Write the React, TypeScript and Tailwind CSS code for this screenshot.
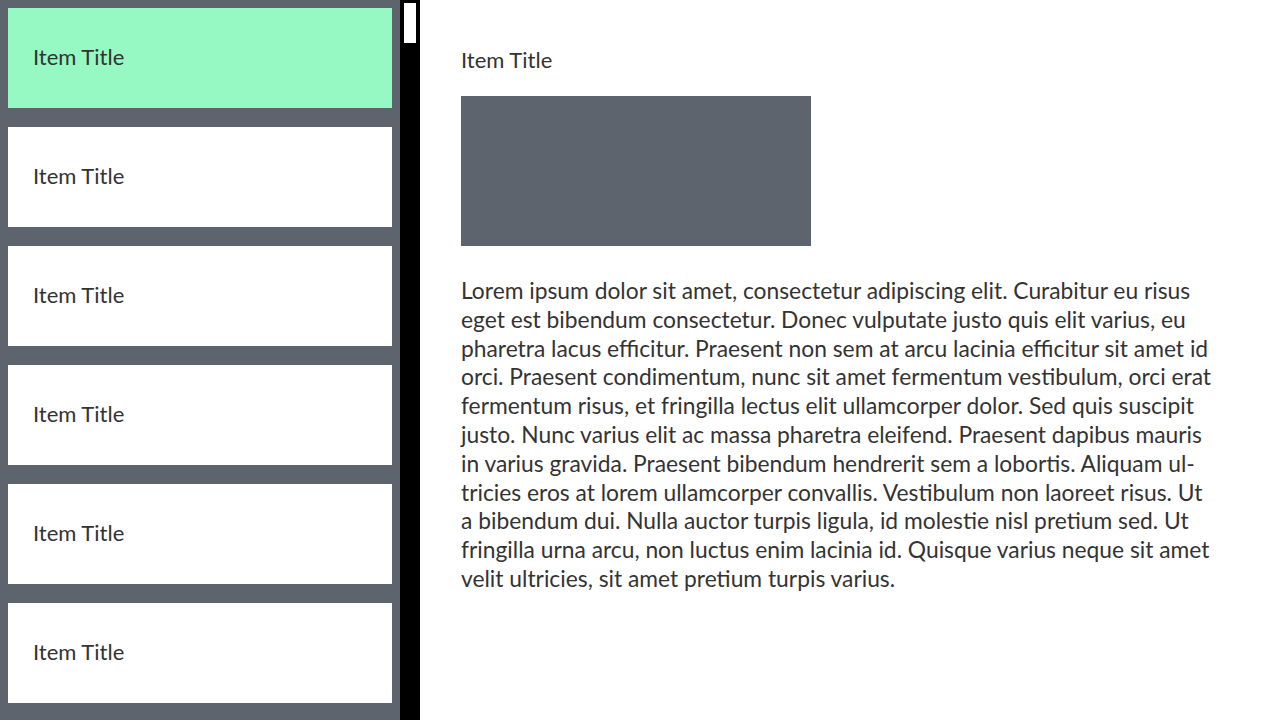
import React from "react";

const items = ["Item Title", "Item Title", "Item Title", "Item Title", "Item Title", "Item Title"];

const lines = [
  "Lorem ipsum dolor sit amet, consectetur adipiscing elit. Curabitur eu risus",
  "eget est bibendum consectetur. Donec vulputate justo quis elit varius, eu",
  "pharetra lacus efficitur. Praesent non sem at arcu lacinia efficitur sit amet id",
  "orci. Praesent condimentum, nunc sit amet fermentum vestibulum, orci erat",
  "fermentum risus, et fringilla lectus elit ullamcorper dolor. Sed quis suscipit",
  "justo. Nunc varius elit ac massa pharetra eleifend. Praesent dapibus mauris",
  "in varius gravida. Praesent bibendum hendrerit sem a lobortis. Aliquam ul-",
  "tricies eros at lorem ullamcorper convallis. Vestibulum non laoreet risus. Ut",
  "a bibendum dui. Nulla auctor turpis ligula, id molestie nisl pretium sed. Ut",
  "fringilla urna arcu, non luctus enim lacinia id. Quisque varius neque sit amet",
  "velit ultricies, sit amet pretium turpis varius.",
];

export default function App() {
  return (
    <div className="flex h-[720px] w-[1280px] overflow-hidden bg-white font-['Lato',sans-serif] text-[#333]">
      {/* list */}
      <div className="flex h-[720px] w-[400px] shrink-0 flex-col gap-[19px] overflow-hidden bg-[#5d646e] p-2">
        {items.map((t, i) => (
          <div
            key={i}
            className={`flex h-[100px] shrink-0 items-center px-[25px] pb-1 text-[22px] ${i === 0 ? "bg-[#96f9c3]" : "bg-white"}`}
          >
            {t}
          </div>
        ))}
      </div>
      {/* scrollbar */}
      <div className="w-5 shrink-0 bg-black px-1 pt-[3px]">
        <div className="h-10 w-3 bg-white" />
      </div>
      {/* detail */}
      <div className="flex flex-col pl-[41px] pt-[46px]">
        <div className="text-[22px] leading-7">Item Title</div>
        <div className="mt-[22px] h-[150px] w-[350px] bg-[#5d646e]" />
        <div className="mt-[30px] text-[22.8px] leading-[28.8px]">
          {lines.map((l, i) => (
            <div key={i} className="whitespace-nowrap">{l}</div>
          ))}
        </div>
      </div>
    </div>
  );
}
